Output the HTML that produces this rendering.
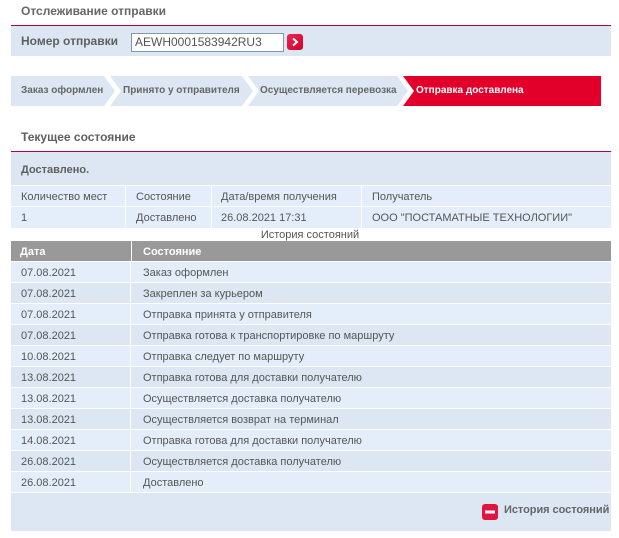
<!DOCTYPE html>
<html><head><meta charset="utf-8"><style>
html,body{margin:0;padding:0;background:#fff}
body{width:619px;height:538px;position:relative;overflow:hidden;font-family:"Liberation Sans",Arial,sans-serif;font-size:11px;color:#555}
.a{position:absolute}
.t{position:absolute;white-space:nowrap;line-height:14px}
.b{font-weight:bold}
.r{position:absolute;left:11px;width:600px;height:20px}
.r i{position:absolute;left:119px;top:0;bottom:0;width:1px;background:#fff}
.r span{position:absolute;top:4px;line-height:14px;white-space:nowrap}
.r span:nth-of-type(1){left:10px}
.r span:nth-of-type(2){left:132px}
</style></head><body>
<div class="t b" style="left:21px;top:4px;font-size:12px;color:#666">Отслеживание отправки</div>
<div class="a" style="left:11px;top:25px;width:600px;height:1px;background:#b8003c"></div>
<div class="a" style="left:11px;top:26px;width:600px;height:30px;background:#dce7f3"></div>
<div class="t b" style="left:21px;top:34px;font-size:12px;color:#5f5f5f">Номер отправки</div>
<div class="a" style="left:131px;top:33px;width:151px;height:17px;border:1px solid #7c9ab5;background:#fff;box-sizing:content-box"></div>
<div class="t" style="left:135px;top:35px;font-size:12px;color:#555">AEWH0001583942RU3</div>
<svg class="a" style="left:287px;top:34px" width="16" height="16" viewBox="0 0 16 16"><defs><linearGradient id="g" x1="0" y1="0" x2="1" y2="1"><stop offset="0" stop-color="#e8284f"/><stop offset="1" stop-color="#d6002a"/></linearGradient></defs><rect width="16" height="16" rx="3" fill="url(#g)"/><path d="M6 4.5L10 8L6 11.5" fill="none" stroke="#fff" stroke-width="2"/></svg>

<svg class="a" style="left:11px;top:76px" width="590" height="30" viewBox="0 0 590 30">
<path d="M0 0H93L104 15L93 30H0Z" fill="#dce7f3"/>
<path d="M99 0H231L242 15L231 30H99L110 15Z" fill="#dce7f3"/>
<path d="M237 0H386L397 15L386 30H237L248 15Z" fill="#dce7f3"/>
<path d="M392 0H590V30H392L403 15Z" fill="#e2002b"/>
</svg>
<div class="t b" style="left:21px;top:84px;color:#666;font-size:10px">Заказ оформлен</div>
<div class="t b" style="left:123px;top:84px;color:#666;font-size:10px">Принято у отправителя</div>
<div class="t b" style="left:260px;top:84px;color:#666;font-size:10px">Осуществляется перевозка</div>
<div class="t b" style="left:416px;top:84px;color:#fff;font-size:10px">Отправка доставлена</div>

<div class="t b" style="left:21px;top:130px;font-size:12px;color:#5f5f5f">Текущее состояние</div>
<div class="a" style="left:11px;top:151px;width:600px;height:1px;background:#b8003c"></div>
<div class="a" style="left:11px;top:152px;width:600px;height:33px;background:#dce7f3"></div>
<div class="t b" style="left:21px;top:163px;color:#5f5f5f">Доставлено.</div>

<div class="a" style="left:11px;top:186px;width:600px;height:20px;background:#e4eefa"></div>
<div class="a" style="left:11px;top:207px;width:600px;height:21px;background:#e4eefa"></div>
<div class="a" style="left:125px;top:186px;width:1px;height:42px;background:#fff"></div>
<div class="a" style="left:211px;top:186px;width:1px;height:42px;background:#fff"></div>
<div class="a" style="left:361px;top:186px;width:1px;height:42px;background:#fff"></div>
<div class="t" style="left:21px;top:190px">Количество мест</div>
<div class="t" style="left:136px;top:190px">Состояние</div>
<div class="t" style="left:221px;top:190px">Дата/время получения</div>
<div class="t" style="left:372px;top:190px">Получатель</div>
<div class="t" style="left:21px;top:211px">1</div>
<div class="t" style="left:136px;top:211px">Доставлено</div>
<div class="t" style="left:221px;top:211px">26.08.2021 17:31</div>
<div class="t" style="left:372px;top:211px">ООО "ПОСТАМАТНЫЕ ТЕХНОЛОГИИ"</div>
<div class="t" style="left:10px;width:600px;text-align:center;top:228px">История состояний</div>

<div class="a" style="left:11px;top:241px;width:600px;height:20px;background:#999"></div>
<div class="a" style="left:131px;top:241px;width:1px;height:20px;background:#fff"></div>
<div class="t b" style="left:20px;top:245px;color:#fff">Дата</div>
<div class="t b" style="left:143px;top:245px;color:#fff">Состояние</div>

<div class="r" style="top:262px;background:#e4eefa"><i></i><span>07.08.2021</span><span>Заказ оформлен</span></div>
<div class="r" style="top:283px;background:#dce7f3"><i></i><span>07.08.2021</span><span>Закреплен за курьером</span></div>
<div class="r" style="top:304px;background:#e4eefa"><i></i><span>07.08.2021</span><span>Отправка принята у отправителя</span></div>
<div class="r" style="top:325px;background:#dce7f3"><i></i><span>07.08.2021</span><span>Отправка готова к транспортировке по маршруту</span></div>
<div class="r" style="top:346px;background:#e4eefa"><i></i><span>10.08.2021</span><span>Отправка следует по маршруту</span></div>
<div class="r" style="top:367px;background:#dce7f3"><i></i><span>13.08.2021</span><span>Отправка готова для доставки получателю</span></div>
<div class="r" style="top:388px;background:#e4eefa"><i></i><span>13.08.2021</span><span>Осуществляется доставка получателю</span></div>
<div class="r" style="top:409px;background:#dce7f3"><i></i><span>13.08.2021</span><span>Осуществляется возврат на терминал</span></div>
<div class="r" style="top:430px;background:#e4eefa"><i></i><span>14.08.2021</span><span>Отправка готова для доставки получателю</span></div>
<div class="r" style="top:451px;background:#dce7f3"><i></i><span>26.08.2021</span><span>Осуществляется доставка получателю</span></div>
<div class="r" style="top:472px;background:#e4eefa"><i></i><span>26.08.2021</span><span>Доставлено</span></div>

<div class="a" style="left:11px;top:493px;width:600px;height:38px;background:#dce7f3"></div>
<svg class="a" style="left:482px;top:504px" width="16" height="16" viewBox="0 0 16 16"><rect width="16" height="16" rx="3" fill="#e2143f"/><rect x="3" y="6.5" width="10" height="3" fill="#fff"/></svg>
<div class="t b" style="left:504px;top:503px;color:#666;letter-spacing:-.05px">История состояний</div>
</body></html>
